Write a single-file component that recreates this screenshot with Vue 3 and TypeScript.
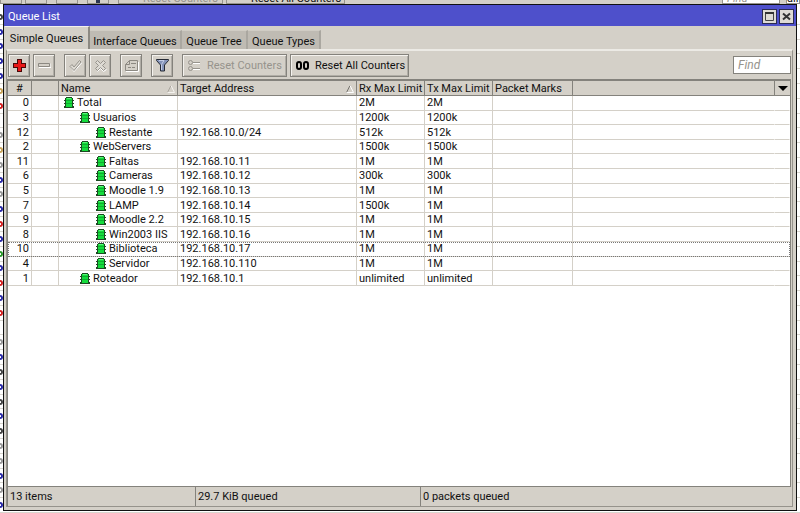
<script setup lang="ts">
import { ref } from 'vue'

interface QueueRow {
  id: number
  name: string
  depth: number
  target: string
  rx: string
  tx: string
}

const tabs: string[] = ['Simple Queues', 'Interface Queues', 'Queue Tree', 'Queue Types']
const activeTab = ref(0)
const selectedId = ref(10)
const search = ref('')

const rows: QueueRow[] = [
  { id: 0, name: 'Total', depth: 0, target: '', rx: '2M', tx: '2M' },
  { id: 3, name: 'Usuarios', depth: 1, target: '', rx: '1200k', tx: '1200k' },
  { id: 12, name: 'Restante', depth: 2, target: '192.168.10.0/24', rx: '512k', tx: '512k' },
  { id: 2, name: 'WebServers', depth: 1, target: '', rx: '1500k', tx: '1500k' },
  { id: 11, name: 'Faltas', depth: 2, target: '192.168.10.11', rx: '1M', tx: '1M' },
  { id: 6, name: 'Cameras', depth: 2, target: '192.168.10.12', rx: '300k', tx: '300k' },
  { id: 5, name: 'Moodle 1.9', depth: 2, target: '192.168.10.13', rx: '1M', tx: '1M' },
  { id: 7, name: 'LAMP', depth: 2, target: '192.168.10.14', rx: '1500k', tx: '1M' },
  { id: 9, name: 'Moodle 2.2', depth: 2, target: '192.168.10.15', rx: '1M', tx: '1M' },
  { id: 8, name: 'Win2003 IIS', depth: 2, target: '192.168.10.16', rx: '1M', tx: '1M' },
  { id: 10, name: 'Biblioteca', depth: 2, target: '192.168.10.17', rx: '1M', tx: '1M' },
  { id: 4, name: 'Servidor', depth: 2, target: '192.168.10.110', rx: '1M', tx: '1M' },
  { id: 1, name: 'Roteador', depth: 1, target: '192.168.10.1', rx: 'unlimited', tx: 'unlimited' },
]

type Tone = 'ink' | 'blue' | 'red' | 'grey' | 'green' | 'ochre' | 'none'
const marks: Tone[] = [
  'ink', 'blue', 'blue', 'blue', 'blue', 'ochre', 'red', 'none', 'grey', 'ochre', 'grey',
  'blue', 'grey', 'blue', 'red', 'blue', 'green', 'blue', 'red', 'blue', 'red', 'none',
  'grey', 'blue', 'ink', 'blue', 'ink', 'blue', 'ink', 'grey', 'grey', 'blue', 'grey', 'blue',
]
</script>

<template>
  <div class="desktop">
    <div class="behind" aria-hidden="true">
      <div class="behind-bar">
        <span class="ghost"></span>
        <span class="ghost gap"></span>
        <span class="ghost gap"></span>
        <span class="ghost gap funnel"></span>
        <span class="ghost wide faded">Reset Counters</span>
        <span class="ghost wide all">Reset All Counters</span>
        <span class="ghost field faded">Find</span>
        <span class="ghost filter">all</span>
      </div>
      <div class="behind-rows">
        <div v-for="(tone, i) in marks" :key="i" class="behind-row"><i :class="tone"></i></div>
      </div>
    </div>

    <main class="window">
      <header class="titlebar">
        <h1>Queue List</h1>
        <button type="button" class="winbtn" aria-label="Maximize">
          <svg viewBox="0 0 11 11" width="11" height="11"><path d="M1.5 1.5h8v8h-8z" fill="none" stroke="#444" /><path d="M1 2h9" stroke="#333" stroke-width="2" /></svg>
        </button>
        <button type="button" class="winbtn" aria-label="Close">
          <svg viewBox="0 0 11 11" width="11" height="11"><path d="M2 2.500l7 6M9 2.500l-7 6" stroke="#333" stroke-width="2" /></svg>
        </button>
      </header>

      <div class="tabs" role="tablist">
        <button
          v-for="(tab, i) in tabs"
          :key="tab"
          type="button"
          role="tab"
          class="tab"
          :class="{ active: i === activeTab }"
          :aria-selected="i === activeTab"
          @click="activeTab = i"
        >{{ tab }}</button>
      </div>

      <section class="panel">
        <div class="toolbar">
          <button type="button" class="tool" aria-label="Add">
            <svg viewBox="0 0 13 13" width="13" height="13"><path d="M4 0h5v4h4v5H9v4H4V9H0V4h4z" fill="#4a0808" /><path d="M5 1h3v4h4v3H8v4H5V8H1V5h4z" fill="#e81818" /></svg>
          </button>
          <button type="button" class="tool gap" aria-label="Remove" disabled>
            <svg viewBox="0 0 13 13" width="13" height="13"><path d="M1 8.500h12v-4" fill="none" stroke="#fff" /><path d="M.5 4.500h11v3H.5z" fill="#d4d0c8" stroke="#8c8982" /></svg>
          </button>
          <button type="button" class="tool" aria-label="Enable" disabled>
            <svg viewBox="0 0 13 13" width="13" height="13"><path d="M2 8.500l3 4L13 3.500" fill="none" stroke="#fff" /><path d="M1 7.500l2-2 2 2.500 5.500-6.500L12 3l-7 8.500z" fill="#dedbd4" stroke="#96938c" /></svg>
          </button>
          <button type="button" class="tool gap" aria-label="Disable" disabled>
            <svg viewBox="0 0 13 13" width="13" height="13"><path d="M3.500 12.500l3-3 3 3 3-2" fill="none" stroke="#fff" /><path d="M1.500 3.500l2-2 3 3 3-3 2 2-3 3 3 3-2 2-3-3-3 3-2-2 3-3z" fill="#dedbd4" stroke="#96938c" /></svg>
          </button>
          <button type="button" class="tool gap" aria-label="Comment" disabled>
            <svg viewBox="0 0 15 13" width="15" height="13"><path d="M2 12.500h12.500V3" fill="none" stroke="#fff" /><path d="M1.500 5.500l4-4h8v10h-12zM1.500 5.500h4v-4M7 4.500h5M4 8.500h3m1 0h3" fill="none" stroke="#8c8982" /></svg>
          </button>
          <button type="button" class="tool gap" aria-label="Filter">
            <svg viewBox="0 0 13 14" width="13" height="14"><path d="M.5 1.500h12v1L8.500 7v6h-4V7L.5 2.500z" fill="#8493b8" stroke="#252a35" /><path d="M3 2.500h5L5.500 6.500V12" fill="none" stroke="#c3cde6" /></svg>
          </button>
          <button type="button" class="tool text reset" disabled>
            <svg viewBox="0 0 13 12" width="13" height="12"><circle cx="2.500" cy="2.500" r="2" fill="none" stroke="#96938c" /><circle cx="2.500" cy="8.500" r="2" fill="none" stroke="#96938c" /><path d="M5 2.500h7M5 8.500h7" stroke="#96938c" /><path d="M5 3.500h7M5 9.500h7" stroke="#fff" /></svg>
            <span>Reset Counters</span>
          </button>
          <button type="button" class="tool text all">
            <svg viewBox="0 0 13 9" width="13" height="9"><rect x="1" y="1" width="4" height="7" rx="2" fill="none" stroke="#000" stroke-width="2" /><rect x="8" y="1" width="4" height="7" rx="2" fill="none" stroke="#000" stroke-width="2" /></svg>
            <span>Reset All Counters</span>
          </button>
          <input v-model="search" class="find" type="text" placeholder="Find" aria-label="Find" />
        </div>

        <div class="grid">
          <table>
            <colgroup>
              <col class="c-num" /><col class="c-flag" /><col class="c-name" /><col class="c-target" />
              <col class="c-limit" /><col class="c-limit" /><col class="c-marks" /><col /><col class="c-menu" />
            </colgroup>
            <thead>
              <tr>
                <th class="num">#</th>
                <th></th>
                <th><div class="head">Name<svg viewBox="0 0 8 8" width="8" height="8"><path d="M4 .5L.5 7.500" stroke="#aaa69e" /><path d="M4 .5l3.500 7H.5" fill="none" stroke="#f4f2ee" /></svg></div></th>
                <th><div class="head">Target Address<svg viewBox="0 0 8 8" width="8" height="8"><path d="M4 .5L.5 7.500" stroke="#77746e" /><path d="M4 .5l3.500 7H.5" fill="none" stroke="#fff" /></svg></div></th>
                <th>Rx Max Limit</th>
                <th>Tx Max Limit</th>
                <th>Packet Marks</th>
                <th></th>
                <th class="menu"><button type="button" aria-label="Choose columns"><svg viewBox="0 0 10 5" width="10" height="5"><path d="M0 0h10L5 5z" /></svg></button></th>
              </tr>
            </thead>
            <tbody>
              <tr v-for="row in rows" :key="row.id" :class="{ focused: row.id === selectedId }" @click="selectedId = row.id">
                <td class="num">{{ row.id }}</td>
                <td></td>
                <td>
                  <div class="name" :class="'depth-' + row.depth">
                    <svg viewBox="0 0 10 11" width="10" height="11"><path d="M2 0h6v1h1v8h1v2H0V9h1V1h1z" fill="#1c4a22" /><path d="M0 3h1v1H0zM0 6h1v1H0zM9 3h1v1H9zM9 6h1v1H9z" fill="#1c4a22" /><path d="M2 1h6v9H2z" fill="#14dc3c" /><path d="M2 3.500h6M2 6.500h6" stroke="#0fae30" /><path d="M3 1.500h4" stroke="#5cf47c" /></svg>
                    <span>{{ row.name }}</span>
                  </div>
                </td>
                <td>{{ row.target }}</td>
                <td>{{ row.rx }}</td>
                <td>{{ row.tx }}</td>
                <td></td>
                <td class="open"></td>
                <td></td>
              </tr>
            </tbody>
          </table>
        </div>

        <footer class="status">
          <span class="s-items">13 items</span>
          <span class="s-bytes">29.7 KiB queued</span>
          <span class="s-packets">0 packets queued</span>
        </footer>
      </section>
    </main>
  </div>
</template>

<style>
body {
  background: #fff;
}
</style>

<style scoped>
* {
  box-sizing: border-box;
}
.desktop {
  position: relative;
  display: flex;
  height: 100vh;
  padding: 4px 3px 2px;
  overflow: hidden;
  font: 11px/14px Roboto, "Liberation Sans", Arial, sans-serif;
  color: #111;
}
button,
input {
  font: inherit;
  color: inherit;
}
svg {
  display: block;
  flex: none;
}
.behind {
  position: absolute;
  inset: 0;
  display: flex;
  flex-direction: column;
  overflow: hidden;
}
.behind-bar {
  display: flex;
  flex: none;
  align-items: flex-end;
  height: 4px;
  background: #d4d0c8;
}
.ghost {
  width: 22px;
  height: 23px;
  margin-right: 3px;
  border: 1px solid #96938c;
  line-height: 34px;
  white-space: nowrap;
}
.ghost.gap {
  margin-right: 9px;
}
.ghost.funnel {
  background: linear-gradient(#2b3550, #2b3550) center / 4px 100% no-repeat;
}
.ghost.wide {
  width: 105px;
  padding-left: 24px;
}
.ghost.all {
  width: 119px;
}
.ghost.faded {
  color: #96938c;
}
.ghost.field {
  width: 58px;
  margin: 0 6px 0 auto;
  padding-left: 4px;
  background: #fff;
  font-style: italic;
}
.ghost.filter {
  width: 14px;
  margin: 0;
  background: #fff;
}
.behind-rows {
  display: grid;
  flex: 1;
  grid-auto-rows: 1fr;
  padding-top: 6px;
}
.behind-row {
  display: flex;
  align-items: center;
  border-bottom: 1px solid #d8d5ce;
}
.behind-row i {
  width: 3px;
  height: 6px;
  border: 2px solid #444;
  border-left: 0;
  border-radius: 0 3px 3px 0;
}
.behind-row .blue {
  border-color: #2a2aa8;
}
.behind-row .red {
  border-color: #d42020;
}
.behind-row .grey {
  border-color: #999;
}
.behind-row .green {
  border-color: #2a9a2a;
}
.behind-row .ochre {
  border-color: #c9a45a;
}
.behind-row .none {
  border-color: transparent;
}
.window {
  position: relative;
  display: flex;
  flex: 1;
  flex-direction: column;
  min-width: 0;
  border: 1px solid #111;
  background: #d4d0c8;
}
.titlebar {
  display: flex;
  gap: 2px;
  align-items: center;
  height: 21px;
  padding: 2px 2px 0 4px;
  background: #4e50cb;
}
h1 {
  flex: 1;
  margin: 0;
  padding-top: 1px;
  font: inherit;
  color: #fff;
}
.winbtn {
  display: grid;
  place-items: center;
  width: 15px;
  height: 15px;
  padding: 0;
  border: 1px solid #2c2c50;
  background: #dedbd5;
}
.tabs {
  display: grid;
  grid-template-columns: 85px 92px 66px 73px;
  align-items: end;
  height: 23px;
  padding-left: 1px;
}
.tab {
  height: 19px;
  padding: 3px 0 0;
  border: 0;
  border-top: 1px solid #d0ccc4;
  border-right: 2px solid #aaa7a0;
  background: #bfbbb3;
  white-space: nowrap;
}
.tab.active {
  height: 23px;
  padding: 2px 0 0;
  border-top-color: #f2f0ec;
  border-right-color: #8c8982;
  background: #d4d0c8;
}
.panel {
  display: flex;
  flex: 1;
  flex-direction: column;
  min-height: 0;
  margin: 0 3px 3px 2px;
  border: 1px solid #96938c;
  border-top: 2px solid #eceae5;
  padding-right: 1px;
}
.toolbar {
  display: flex;
  align-items: center;
  height: 28px;
  padding-left: 1px;
}
.tool {
  display: flex;
  flex: none;
  align-items: center;
  justify-content: center;
  width: 22px;
  height: 23px;
  margin-right: 3px;
  padding: 0;
  border: 1px solid #84827c;
  background: #d4d0c8;
  box-shadow: inset 1px 1px #f4f2ee, inset -1px -1px #b0ada6;
}
.tool.gap {
  margin-right: 9px;
}
.tool:disabled {
  color: #96938c;
}
.tool.text {
  gap: 6px;
  justify-content: flex-start;
  width: 105px;
  padding: 1px 0 0 5px;
  line-height: 16px;
  white-space: nowrap;
}
.tool.all {
  width: 119px;
}
.find {
  width: 58px;
  height: 18px;
  margin-left: auto;
  padding: 0 4px;
  border: 1px solid #84827c;
  background: #fff;
  font-size: 12px;
  outline: 0;
}
.find::placeholder {
  color: #96938c;
  font-style: italic;
  opacity: 1;
}
.grid {
  flex: 1;
  min-height: 0;
  border: 1px solid #84827c;
  border-top-width: 2px;
  background: #fff;
  overflow: hidden;
}
table {
  width: 100%;
  height: 205px;
  border-collapse: separate;
  border-spacing: 0;
  table-layout: fixed;
}
.c-num {
  width: 24px;
}
.c-flag {
  width: 27px;
}
.c-name {
  width: 119px;
}
.c-target {
  width: 179px;
}
.c-limit {
  width: 68px;
}
.c-marks {
  width: 80px;
}
.c-menu {
  width: 15px;
}
th {
  height: 15px;
  padding: 1px 2px 0;
  border-right: 1px solid #84827c;
  border-bottom: 1px solid #84827c;
  background: #d4d0c8;
  font-weight: 400;
  line-height: 13px;
  text-align: left;
  white-space: nowrap;
}
th.num {
  text-align: center;
}
.head {
  display: flex;
  align-items: center;
  justify-content: space-between;
}
th.menu {
  padding: 0;
  border-right: 0;
}
.menu button {
  display: grid;
  place-items: center;
  width: 100%;
  height: 14px;
  padding: 0;
  border: 0;
  background: none;
}
td {
  padding: 0 2px;
  border-right: 1px solid #d4d0c8;
  border-bottom: 1px solid #d4d0c8;
  line-height: 13px;
  white-space: nowrap;
}
td.num {
  text-align: right;
}
td.open,
td:last-child {
  border-right-color: transparent;
}
.name {
  display: flex;
  gap: 3px;
  align-items: center;
  padding-left: 3px;
}
.name.depth-1 {
  padding-left: 19px;
}
.name.depth-2 {
  padding-left: 35px;
}
.focused {
  outline: 1px dotted #777;
  outline-offset: -1px;
}
.status {
  display: flex;
  height: 19px;
}
.status span {
  padding: 3px 2px 0;
  border-left: 1px solid #84827c;
  white-space: nowrap;
}
.s-items {
  width: 188px;
}
.s-bytes {
  width: 225px;
}
.s-packets {
  flex: 1;
}
</style>
